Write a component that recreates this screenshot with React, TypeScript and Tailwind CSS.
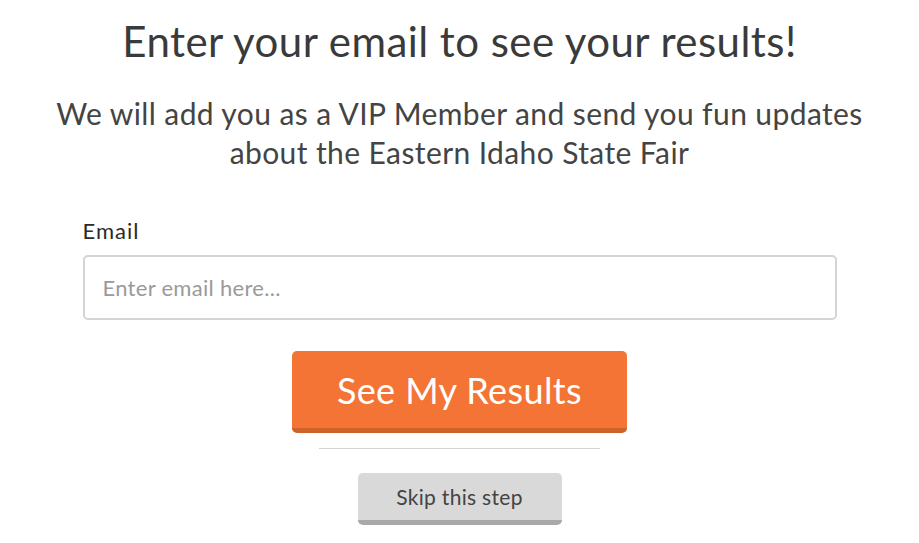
import React from "react";

export default function App() {
  return (
    <div
      className="w-[919px] h-[543px] bg-white flex flex-col items-center text-[#3d3d3d]"
      style={{ fontFamily: "Lato, 'Open Sans', sans-serif" }}
    >
      <h1 className="mt-[16px] text-[42px] leading-[50px] font-normal tracking-[0.45px] text-[#3a3a3a]">
        Enter your email to see your results!
      </h1>
      <p className="mt-[28px] text-[30px] leading-[39px] tracking-[0.4px] text-center text-[#444]">
        We will add you as a VIP Member and send you fun updates
        <br />
        about the Eastern Idaho State Fair
      </p>
      <div className="mt-[46px] w-[754px] flex flex-col">
        <label className="text-[22px] leading-[26px] font-normal tracking-[1px] text-[#2a2a2a]">Email</label>
        <input
          className="mt-[11px] h-[65px] w-full rounded-[5px] border-2 border-[#d4d4d4] px-[18px] text-[22px] tracking-[0.3px] outline-none placeholder:text-[#9a9a9a]"
          placeholder="Enter email here..."
        />
      </div>
      <button className="mt-[31px] w-[335px] h-[82px] rounded-[5px] bg-[#f37435] border-b-[5px] border-[#cf6227] text-white text-[36px] leading-[36px] tracking-[0.4px]">
        See My Results
      </button>
      <div className="mt-[15px] w-[281px] h-px bg-[#d4d4d4]" />
      <button className="mt-[24px] w-[204px] h-[52px] rounded-[5px] bg-[#d9d9d9] border-b-[5px] border-[#a9a9a9] text-[#444] text-[21px] leading-[21px] tracking-[0.3px]">
        Skip this step
      </button>
    </div>
  );
}
